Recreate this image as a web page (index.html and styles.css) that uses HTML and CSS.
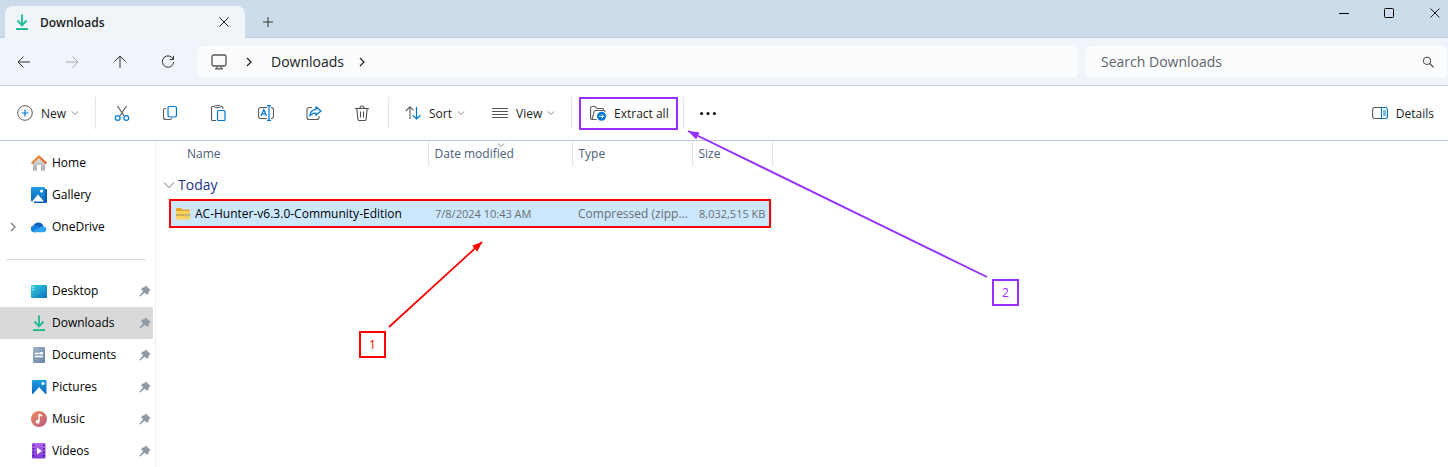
FILE: index.html
```
<!DOCTYPE html>
<html lang="en">
<head>
<meta charset="utf-8">
<meta name="viewport" content="width=device-width, initial-scale=1">
<title>Downloads</title>
<link rel="stylesheet" href="styles.css">
</head>
<body>
<svg class="defs" aria-hidden="true">
  <defs>
    <linearGradient id="g-down" x1="0" y1="0" x2="0" y2="1"><stop offset="0" stop-color="#3fd08f"/><stop offset="1" stop-color="#12a594"/></linearGradient>
    <linearGradient id="g-roof" x1="0" y1="0" x2="1" y2="1"><stop offset="0" stop-color="#f6a03a"/><stop offset="1" stop-color="#d8501c"/></linearGradient>
    <linearGradient id="g-wall" x1="0" y1="0" x2="0" y2="1"><stop offset="0" stop-color="#e4e4e4"/><stop offset="1" stop-color="#a9a9a9"/></linearGradient>
    <linearGradient id="g-blue" x1="0" y1="0" x2="0" y2="1"><stop offset="0" stop-color="#1f9de6"/><stop offset="1" stop-color="#0a66bd"/></linearGradient>
    <linearGradient id="g-desk" x1="0" y1="0" x2="1" y2="1"><stop offset="0" stop-color="#36d0dc"/><stop offset="1" stop-color="#0b72c0"/></linearGradient>
    <linearGradient id="g-doc" x1="0" y1="0" x2="1" y2="1"><stop offset="0" stop-color="#a3b7ca"/><stop offset="1" stop-color="#6784a3"/></linearGradient>
    <linearGradient id="g-music" x1="0" y1="0" x2="1" y2="1"><stop offset="0" stop-color="#ee8b55"/><stop offset="1" stop-color="#b75a86"/></linearGradient>
    <linearGradient id="g-video" x1="0" y1="0" x2="0" y2="1"><stop offset="0" stop-color="#b565f2"/><stop offset="1" stop-color="#7f3bdc"/></linearGradient>
    <symbol id="download" viewBox="0 0 16 16"><path d="M8 .5V11M3.500 6.500 8 11.300 12.500 6.500" fill="none" stroke="#25b997" stroke-width="1.900"/><path d="M2 14h12v2H2z" fill="url(#g-down)"/></symbol>
    <symbol id="chev" viewBox="0 0 8 8"><path d="M1 2.500 4 5.500 7 2.500" fill="none" stroke="currentColor"/></symbol>
    <symbol id="chev-right" viewBox="0 0 8 10"><path d="M2 1l4 4-4 4" fill="none" stroke="currentColor" stroke-width="1.200"/></symbol>
    <symbol id="pin" viewBox="0 0 12 12"><path d="M6.800.8 11.300 5 9.800 5.800 9.200 8.800 7.700 9.300 5.600 7.500 1.300 11.300.8 10.800 4.400 6.400 2.600 4.400 3.200 3 6 2.500z" fill="#8f9aa3" stroke="#8f9aa3" stroke-width=".6"/></symbol>
    <symbol id="cross" viewBox="0 0 10 10"><path d="M.5.500l9 9m0-9-9 9" fill="none" stroke="currentColor"/></symbol>
    <marker id="tip-red" viewBox="0 0 10 8" refX="10" refY="4" markerWidth="10" markerHeight="8" markerUnits="userSpaceOnUse" orient="auto"><path d="M0 0 10 4 0 8z" fill="#f00"/></marker>
    <marker id="tip-purple" viewBox="0 0 11 8" refX="11" refY="4" markerWidth="11" markerHeight="8" markerUnits="userSpaceOnUse" orient="auto"><path d="M0 0 11 4 0 8z" fill="#9630ff"/></marker>
  </defs>
</svg>

<div class="window">
  <header class="titlebar">
    <div class="tab">
      <svg class="i16"><use href="#download"/></svg>
      <span class="tab-title">Downloads</span>
      <button class="tab-close" aria-label="Close tab"><svg class="i10"><use href="#cross"/></svg></button>
    </div>
    <button class="new-tab" aria-label="New tab"><svg class="i10" viewBox="0 0 10 10"><path d="M5 0v10M0 5h10" fill="none" stroke="#333"/></svg></button>
    <div class="caption">
      <button aria-label="Minimize"><svg class="i10" viewBox="0 0 10 10"><path d="M0 5.500h10" stroke="#000"/></svg></button>
      <button aria-label="Maximize"><svg class="i10" viewBox="0 0 10 10"><rect x=".5" y=".5" width="9" height="9" rx="1" fill="none" stroke="#000"/></svg></button>
      <button aria-label="Close"><svg class="i10"><use href="#cross"/></svg></button>
    </div>
  </header>

  <div class="navbar">
    <button class="nav-btn" aria-label="Back"><svg class="i14" viewBox="0 0 14 14"><path d="M13 7H1.500M6.500 1.500 1 7l5.500 5.500" fill="none" stroke="#333"/></svg></button>
    <button class="nav-btn" aria-label="Forward"><svg class="i14" viewBox="0 0 14 14"><path d="M1 7h11.500M7.500 1.500 13 7l-5.500 5.500" fill="none" stroke="#a3a8ac"/></svg></button>
    <button class="nav-btn" aria-label="Up"><svg class="i14" viewBox="0 0 14 14"><path d="M7 13V1.500M1.500 6.500 7 1l5.500 5.500" fill="none" stroke="#333"/></svg></button>
    <button class="nav-btn" aria-label="Refresh"><svg class="i14" viewBox="0 0 14 14"><path d="M12.200 4.200A5.700 5.700 0 1 0 12.700 7M12.500.8v3.700H8.800" fill="none" stroke="#333"/></svg></button>
    <nav class="address" aria-label="Address">
      <button class="pc" aria-label="This PC"><svg class="i16" viewBox="0 0 16 16"><rect x="1" y="1" width="14" height="11" rx="1.800" fill="none" stroke="#555" stroke-width="1.300"/><path d="M6 12v2.500M10 12v2.500M4 14.800h8" fill="none" stroke="#555" stroke-width="1.200"/></svg></button>
      <svg class="crumb-sep"><use href="#chev-right"/></svg>
      <a class="crumb" href="#">Downloads</a>
      <svg class="crumb-sep"><use href="#chev-right"/></svg>
    </nav>
    <div class="search">
      <input type="text" placeholder="Search Downloads" aria-label="Search Downloads">
      <svg class="i12" viewBox="0 0 12 12"><circle cx="5" cy="4.800" r="3.700" fill="none" stroke="#444"/><path d="M7.700 7.500 11.500 11.300" stroke="#444" stroke-width="1.200"/></svg>
    </div>
  </div>

  <div class="toolbar">
    <button class="cmd new"><svg class="i16" viewBox="0 0 16 16"><circle cx="8" cy="8" r="7.300" fill="none" stroke="#5a5a5a"/><path d="M8 4.500v7M4.500 8h7" stroke="#0078d4" stroke-width="1.200"/></svg><span>New</span><svg class="i8"><use href="#chev"/></svg></button>
    <span class="rule"></span>
    <button class="tool" aria-label="Cut"><svg class="i16" viewBox="0 0 16 16"><path d="M3.500 1 10 10.800M12.500 1 6 10.800" fill="none" stroke="#555" stroke-width="1.100"/><circle cx="3.700" cy="13" r="2.400" fill="none" stroke="#0078d4" stroke-width="1.200"/><circle cx="12.300" cy="13" r="2.400" fill="none" stroke="#0078d4" stroke-width="1.200"/></svg></button>
    <button class="tool" aria-label="Copy"><svg class="i16" viewBox="0 0 16 16"><path d="M4 3.500H3A1.700 1.700 0 0 0 1.500 5.200v7A2.300 2.300 0 0 0 3.800 14.500H8A1.700 1.700 0 0 0 9.700 13" fill="none" stroke="#5a5a5a" stroke-width="1.100"/><rect x="6" y="1.500" width="8.500" height="10.500" rx="1.700" fill="#f8fbff" stroke="#0078d4" stroke-width="1.200"/></svg></button>
    <button class="tool" aria-label="Paste"><svg class="i16" viewBox="0 0 16 16"><path d="M4.500 1.500h-2A1 1 0 0 0 1.500 2.500v12a1 1 0 0 0 1 1H6M10.500 1.500h1.300a1 1 0 0 1 1 1V4" fill="none" stroke="#5a5a5a" stroke-width="1.100"/><rect x="4.500" y=".6" width="6" height="2" rx="1" fill="none" stroke="#5a5a5a"/><rect x="7.500" y="5.500" width="7.500" height="10" rx="1" fill="#f4f8fc" stroke="#0078d4" stroke-width="1.200"/></svg></button>
    <button class="tool" aria-label="Rename"><svg class="i16" viewBox="0 0 16 16"><path d="M9 2.500H2.700A2.200 2.200 0 0 0 .5 4.700v6.600a2.200 2.200 0 0 0 2.200 2.200H9M13 2.500a2.400 2.400 0 0 1 2.500 2.200v6.600A2.400 2.400 0 0 1 13 13.500" fill="none" stroke="#5a5a5a" stroke-width="1.100"/><path d="M9 .7h4M11 .7v14.600M9 15.300h4M3 11 5.800 4.500 8.500 11M4 8.800h3.700" fill="none" stroke="#0078d4" stroke-width="1.200"/></svg></button>
    <button class="tool" aria-label="Share"><svg class="i16" viewBox="0 0 16 16"><path d="M6 2.500H3.300A2.300 2.300 0 0 0 1 4.800v7.400a2.300 2.300 0 0 0 2.300 2.300h7.400a2.300 2.300 0 0 0 2.300-2.300V11" fill="none" stroke="#5a5a5a" stroke-width="1.100"/><path d="M10 1.800 15 6l-5 4.300V8C7 8 5.300 8.800 3.800 11 4 7 6.500 4.700 10 4.500z" fill="#e5f2fc" stroke="#0078d4" stroke-width="1.200" stroke-linejoin="round"/></svg></button>
    <button class="tool" aria-label="Delete"><svg class="i16" viewBox="0 0 16 16"><path d="M1 3.500h14M6 3A2 2 0 0 1 10 3M2.800 3.500 3.900 14a1.500 1.500 0 0 0 1.500 1.500h5.200a1.500 1.500 0 0 0 1.500-1.500l1.100-10.500M6.500 6.500v6M9.500 6.500v6" fill="none" stroke="#4d4d4d" stroke-width="1.100"/></svg></button>
    <span class="rule"></span>
    <button class="cmd sort"><svg class="i16" viewBox="0 0 16 16"><path d="M5 14V2M.8 6 5 1.700 8.500 5.300" fill="none" stroke="#5a5a5a" stroke-width="1.100"/><path d="M11.500 2v12M7.700 10.200l3.800 3.800 4-3.800" fill="none" stroke="#0078d4" stroke-width="1.200"/></svg><span>Sort</span><svg class="i8"><use href="#chev"/></svg></button>
    <button class="cmd view"><svg class="i16" viewBox="0 0 16 16"><path d="M0 3.500h16M0 6.500h16M0 9.500h16M0 12.500h16" stroke="#555"/></svg><span>View</span><svg class="i8"><use href="#chev"/></svg></button>
    <span class="rule"></span>
    <button class="cmd extract"><svg class="i16" viewBox="0 0 16 16"><path d="M2 14.500A1.500 1.500 0 0 1 .6 13V3A1.500 1.500 0 0 1 2.100 1.500H5l1.800 2h5.400a1.500 1.500 0 0 1 1.500 1.500M6.500 14.500H2L4 7A1.500 1.500 0 0 1 5.400 5.500h8.300A1.400 1.400 0 0 1 15 7" fill="none" stroke="#5a5a5a" stroke-width="1.100"/><circle cx="11.500" cy="11.300" r="4.500" fill="#0078d4"/><path d="M9 11.300h4.500M11.700 9.300l2 2-2 2" fill="none" stroke="#fff"/></svg><span>Extract all</span></button>
    <span class="rule"></span>
    <button class="tool more" aria-label="See more"><svg class="i16" viewBox="0 0 16 16"><circle cx="1.600" cy="8.500" r="1.500"/><circle cx="8" cy="8.500" r="1.500"/><circle cx="14.400" cy="8.500" r="1.500"/></svg></button>
    <button class="cmd details"><svg class="i16" viewBox="0 0 16 16"><path d="M9.500 2.500H2.800A2.200 2.200 0 0 0 .6 4.700v6.600a2.200 2.200 0 0 0 2.200 2.200h6.700" fill="none" stroke="#555" stroke-width="1.100"/><path d="M9.500 2.500h3.700a2.200 2.200 0 0 1 2.200 2.200v6.600a2.200 2.200 0 0 1-2.200 2.200H9.500zM11 6h3M11 8h3M11 10h3" fill="none" stroke="#0078d4" stroke-width="1.100"/></svg><span>Details</span></button>
  </div>

  <div class="body">
    <nav class="sidebar" aria-label="Folders">
      <a class="item" href="#"><span class="twist"></span><svg class="i16" viewBox="0 0 16 16"><path d="M2 7.500 8 2l6 5.500V15.500H10V10H6v5.500H2z" fill="url(#g-wall)"/><path d="M8 0 0 7.800 1.300 9.200 8 3l6.700 6.200L16 7.800z" fill="url(#g-roof)"/></svg><span class="label">Home</span></a>
      <a class="item" href="#"><span class="twist"></span><svg class="i16" viewBox="0 0 16 16"><path d="M3 2h12a1 1 0 0 1 1 1v12a1 1 0 0 1-1 1H3z" fill="#0b5cad"/><rect width="14" height="14.500" rx="1" fill="url(#g-blue)"/><path d="M1 14.500 7 7.500l6 7z" fill="#fff"/><circle cx="10.500" cy="4" r="1.500" fill="#fff"/></svg><span class="label">Gallery</span></a>
      <a class="item" href="#"><span class="twist"><svg class="arrow"><use href="#chev-right"/></svg></span><svg class="i16" viewBox="0 0 16 16"><path d="M3.500 13.300A3.400 3.400 0 0 1 2.600 6.600 5.300 5.300 0 0 1 12.400 7z" fill="#0f5fc0"/><path d="M0 10A3.400 3.400 0 0 1 3.500 6.500C6 6.300 8 8 10 9.500L4 13.300A3.400 3.400 0 0 1 0 10z" fill="#1481dc"/><path d="M1.500 12.500 9 8.300C10 7.300 11.500 7 12.700 7.200A3.100 3.100 0 0 1 13 13.300H3.500A3.300 3.300 0 0 1 1.500 12.500z" fill="#2aa4ec"/></svg><span class="label">OneDrive</span></a>
      <hr class="split">
      <a class="item" href="#"><span class="twist"></span><svg class="i16" viewBox="0 0 16 16"><rect y="2" width="16" height="13" rx="1" fill="url(#g-desk)"/><path d="M1.500 3.500h1.200v1.200H1.500zM1.500 6h1.200v1.200H1.500z" fill="#fff"/></svg><span class="label">Desktop</span><svg class="i12"><use href="#pin"/></svg></a>
      <a class="item selected" href="#"><span class="twist"></span><svg class="i16"><use href="#download"/></svg><span class="label">Downloads</span><svg class="i12"><use href="#pin"/></svg></a>
      <a class="item" href="#"><span class="twist"></span><svg class="i16" viewBox="0 0 16 16"><rect x="2" y="0" width="12" height="16" rx="1" fill="url(#g-doc)"/><path d="M4 6.500h4M4 9.500h8" stroke="#fff" stroke-width="1.300"/><path d="M8.500 5h3.500v2.500H8.500z" fill="#e8f0f8"/></svg><span class="label">Documents</span><svg class="i12"><use href="#pin"/></svg></a>
      <a class="item" href="#"><span class="twist"></span><svg class="i16" viewBox="0 0 16 16"><rect x="1" y="1" width="14.500" height="14" rx="1" fill="url(#g-blue)"/><path d="M2 15l6-7 6.500 7z" fill="#fff"/><circle cx="12" cy="4.500" r="1.500" fill="#fff"/></svg><span class="label">Pictures</span><svg class="i12"><use href="#pin"/></svg></a>
      <a class="item" href="#"><span class="twist"></span><svg class="i16" viewBox="0 0 16 16"><circle cx="8" cy="8" r="8" fill="url(#g-music)"/><path d="M8 3v7.500M8 3.500l3 1.300" stroke="#fff" stroke-width="1.500"/><circle cx="6.700" cy="10.700" r="2" fill="#fff"/></svg><span class="label">Music</span><svg class="i12"><use href="#pin"/></svg></a>
      <a class="item" href="#"><span class="twist"></span><svg class="i16" viewBox="0 0 16 16"><rect x="1" width="13.500" height="15.500" rx="1" fill="url(#g-video)"/><path d="M2.500 1.500v13M13 1.500v13" stroke="#3e1a87" stroke-width="1.500" stroke-dasharray="1.500 2"/><path d="M6 4.500 11 8l-5 3.500z" fill="#fff"/></svg><span class="label">Videos</span><svg class="i12"><use href="#pin"/></svg></a>
    </nav>

    <main class="content">
      <table class="files">
        <colgroup><col class="c-name"><col class="c-date"><col class="c-type"><col class="c-size"></colgroup>
        <thead>
          <tr><th>Name</th><th class="sorted">Date modified<svg class="i8"><use href="#chev"/></svg></th><th>Type</th><th>Size</th></tr>
        </thead>
        <tbody>
          <tr class="group"><td colspan="4"><button class="group-btn"><svg class="i12" viewBox="0 0 12 12"><path d="M1 3.500 6 8.500 11 3.500" fill="none" stroke="#777"/></svg>Today</button></td></tr>
          <tr class="file">
            <td><span class="file-name"><svg class="i16" viewBox="0 0 16 16"><path d="M1 3A1 1 0 0 1 2 2h4l1.500 1.500H14a1 1 0 0 1 1 1V7H1z" fill="#e9a52b"/><path d="M1 5h14v7.500a1 1 0 0 1-1 1H2a1 1 0 0 1-1-1z" fill="#fcd35c"/><path d="M1 9h14" stroke="#a08a55" stroke-width="1.600" stroke-dasharray="1.500 .7"/><path d="M11.500 7.500h2v3h-2z" fill="#b9b9b9"/></svg>AC-Hunter-v6.3.0-Community-Edition</span></td>
            <td class="num">7/8/2024 10:43 AM</td><td>Compressed (zipp...</td><td class="num">8,032,515 KB</td>
          </tr>
        </tbody>
      </table>
    </main>
  </div>

  <div class="mark mark-row"></div>
  <div class="mark mark-extract"></div>
  <svg class="arrows" aria-hidden="true">
    <path d="M389 327 482 242" fill="none" stroke="#f00" stroke-width="1.700" marker-end="url(#tip-red)"/>
    <path d="M987 277 688 131" fill="none" stroke="#9630ff" stroke-width="1.900" marker-end="url(#tip-purple)"/>
  </svg>
  <div class="mark step step-one">1</div>
  <div class="mark step step-two">2</div>
</div>
</body>
</html>
```
FILE: styles.css
```
* { box-sizing: border-box; }
body {
  margin: 0;
  background: #fff;
  color: #1b1b1b;
  font: 12px/16px "Open Sans", "Noto Sans", sans-serif;
}
button { display: flex; align-items: center; padding: 0; border: 0; background: none; color: inherit; font: inherit; }
a { color: inherit; text-decoration: none; }
svg { display: block; flex: none; }
.defs { position: absolute; width: 0; height: 0; }
.i8 { width: 8px; height: 8px; color: #888; }
.i10 { width: 10px; height: 10px; }
.i12 { width: 12px; height: 12px; }
.i14 { width: 14px; height: 14px; }
.i16 { width: 16px; height: 16px; }

.window { position: relative; min-height: 100vh; overflow: hidden; display: flex; flex-direction: column; }

.titlebar { display: flex; height: 38px; padding-left: 5px; background: #cddceb; border-bottom: 1px solid #bccfe0; }
.tab {
  display: flex; align-items: center; gap: 10px;
  width: 240px; height: 32px; margin-top: 6px; padding: 0 16px 0 9px;
  border-radius: 8px 8px 0 0; background: #f0f5fa;
}
.tab-title { flex: 1; padding-top: 2px; font-weight: 600; }
.new-tab { align-self: flex-end; width: 45px; height: 30px; justify-content: center; }
.caption { display: flex; margin-left: auto; height: 26px; }
.caption button { width: 45px; justify-content: center; }
.caption button:last-child { width: 37px; padding-left: 11px; }

.navbar { display: flex; align-items: center; height: 48px; background: #eff5fa; border-bottom: 1px solid #c8d4df; }
.nav-btn { width: 48px; height: 32px; justify-content: center; }
.address, .search { height: 32px; border-radius: 5px; background: #fafcfe; display: flex; align-items: center; font-size: 14px; line-height: 20px; }
.address { flex: 867; margin-left: 6px; padding-left: 13px; color: #222; }
.crumb-sep { width: 8px; height: 10px; margin: 0 18px; }
.crumb-sep:last-child { margin-left: 14px; }
.search { flex: 333; margin-left: 8px; margin-right: 1px; padding: 0 13px 0 15px; }
.search input { flex: 1; min-width: 0; border: 0; padding: 0; background: none; font: inherit; color: #222; }
.search input::placeholder { color: #5f6368; opacity: 1; }

.toolbar { display: flex; align-items: center; height: 55px; padding-left: 17px; border-bottom: 1px solid #bccbdb; }
.rule { width: 1px; height: 32px; background: #e6e6e6; }
.cmd { gap: 8px; height: 32px; white-space: nowrap; }
.cmd span { padding-top: 2px; }
.cmd .i8 { margin-left: -3px; }
.new { width: 78px; }
.tool { width: 48px; height: 32px; justify-content: center; }
.rule + .tool { margin-left: 2px; }
.tool + .rule { margin-left: 2px; }
.sort { width: 87px; margin-left: 16px; }
.view { width: 79px; }
.extract { width: 93px; margin-left: 18px; }
.more { color: #111; }
.toolbar .more { margin-left: 0; }
.details { margin-left: auto; margin-right: 14px; }

.body { flex: 1; display: flex; }
.sidebar { width: 156px; padding-top: 6px; border-right: 1px solid #f0f0f0; color: #000; }
.item { display: flex; align-items: center; height: 32px; margin-right: 2px; padding-right: 2px; border-radius: 0 2px 2px 0; }
.item.selected { background: #d9d9d9; }
.twist { width: 31px; padding-left: 9px; }
.arrow { width: 8px; height: 10px; color: #777; }
.label { flex: 1; margin-left: 5px; }
.split { height: 1px; margin: 16px 10px 15px 7px; border: 0; background: #d0d0d0; }

.content { flex: 1; padding-left: 14px; }
.files { width: 602px; table-layout: fixed; border-collapse: collapse; }
.c-name { width: 258px; }
.c-date { width: 144px; }
.c-type { width: 120px; }
.c-size { width: 80px; }
.files th, .files td { padding: 0 0 0 6px; text-align: left; font-weight: 400; white-space: nowrap; }
.files th { position: relative; height: 25px; border-right: 1px solid #e2e2e2; color: #4c607a; }
.files th:first-child { padding-left: 17px; }
.sorted .i8 { position: absolute; top: 0; left: 68px; }
.files .group td { height: 35px; padding: 3px 0 0; }
.group-btn { margin-left: -7px; gap: 3px; color: #1e3287; font-size: 14px; line-height: 20px; }
.file { height: 25px; background: #cce8ff; color: #6d6d6d; }
.files .file td:first-child { padding-left: 5px; color: #000; }
.files .num { padding-left: 7px; font-size: 11px; }
.file-name { display: flex; align-items: center; gap: 4px; }

.mark { position: absolute; border: 2px solid #f00; }
.mark-row { left: 169px; top: 199px; width: 602px; height: 29px; }
.mark-extract { left: 579px; top: 97px; width: 99px; height: 33px; border-color: #9630ff; }
.arrows { position: absolute; left: 0; top: 0; width: 100%; height: 100%; pointer-events: none; }
.step { width: 27px; height: 27px; display: flex; align-items: center; justify-content: center; color: #f00; }
.step-one { left: 359px; top: 331px; }
.step-two { left: 992px; top: 279px; border-color: #9630ff; color: #9630ff; }
```
